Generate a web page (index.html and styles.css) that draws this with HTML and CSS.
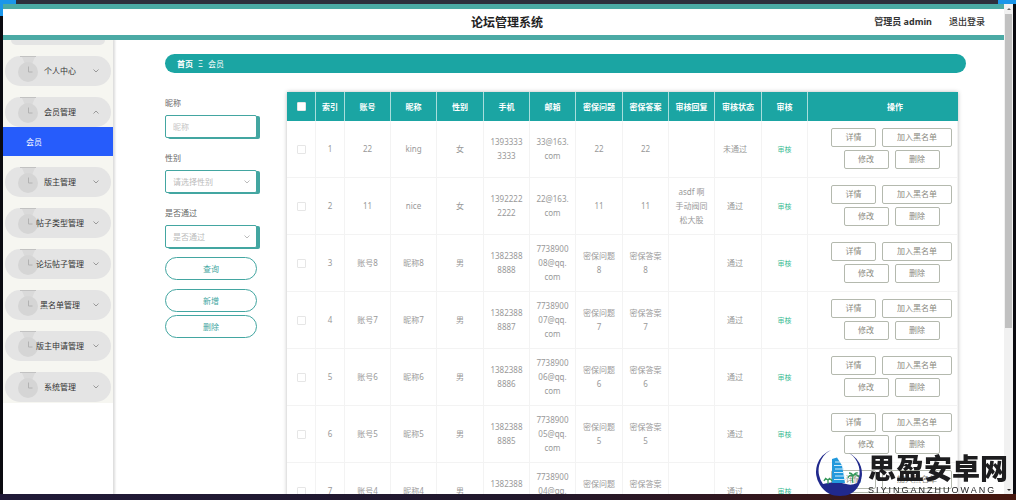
FILE: index.html
```
<!DOCTYPE html>
<html lang="zh-CN">
<head>
<meta charset="utf-8">
<title>论坛管理系统</title>
<link rel="stylesheet" href="styles.css">
</head>
<body>
<svg class="defs" aria-hidden="true">
  <symbol id="medal" viewBox="0 0 20 28">
    <path d="M4 2h13l-3 7H7z" fill="#dadada"/>
    <path d="M2 1.500h16" stroke="#c2c2c2"/>
    <circle cx="10" cy="17" r="10" fill="#d5d5d5"/>
    <path d="M10.500 11.500v5.500h4" fill="none" stroke="#b2b2b2"/>
  </symbol>
  <symbol id="chev" viewBox="0 0 8 6"><path d="M1.500 1.500L4 4l2.500-2.500" fill="none" stroke="currentColor"/></symbol>
</svg>
<div class="frame">
  <div class="app">
    <header class="top">
      <span></span>
      <h1>论坛管理系统</h1>
      <div class="user"><strong>管理员 admin</strong><a href="#">退出登录</a></div>
    </header>
    <div class="body">
      <aside class="side">
        <nav class="menu">
          <div class="clipped"></div>
          <button class="pill"><svg class="medal"><use href="#medal"/></svg><span>个人中心</span><svg class="chev"><use href="#chev"/></svg></button>
          <button class="pill open"><svg class="medal"><use href="#medal"/></svg><span>会员管理</span><svg class="chev"><use href="#chev"/></svg></button>
          <a class="sub" href="#">会员</a>
          <button class="pill"><svg class="medal"><use href="#medal"/></svg><span>版主管理</span><svg class="chev"><use href="#chev"/></svg></button>
          <button class="pill"><svg class="medal"><use href="#medal"/></svg><span>帖子类型管理</span><svg class="chev"><use href="#chev"/></svg></button>
          <button class="pill"><svg class="medal"><use href="#medal"/></svg><span>论坛帖子管理</span><svg class="chev"><use href="#chev"/></svg></button>
          <button class="pill"><svg class="medal"><use href="#medal"/></svg><span>黑名单管理</span><svg class="chev"><use href="#chev"/></svg></button>
          <button class="pill"><svg class="medal"><use href="#medal"/></svg><span>版主申请管理</span><svg class="chev"><use href="#chev"/></svg></button>
          <button class="pill"><svg class="medal"><use href="#medal"/></svg><span>系统管理</span><svg class="chev"><use href="#chev"/></svg></button>
        </nav>
      </aside>
      <main class="main">
        <div class="crumb"><strong>首页</strong><span>Ξ</span><span>会员</span></div>
        <div class="content">
          <form class="filter">
            <label for="nick">昵称</label>
            <input class="field" id="nick" type="text" placeholder="昵称">
            <label for="sex">性别</label>
            <div class="pick"><select class="field" id="sex"><option>请选择性别</option></select><svg class="chev"><use href="#chev"/></svg></div>
            <label for="pass">是否通过</label>
            <div class="pick"><select class="field" id="pass"><option>是否通过</option></select><svg class="chev"><use href="#chev"/></svg></div>
            <button class="round" type="button">查询</button>
            <button class="round add" type="button">新增</button>
            <button class="round" type="button">删除</button>
          </form>
          <table class="grid">
            <colgroup><col class="c-s"><col class="c-s"><col class="c-m"><col class="c-m"><col class="c-l"><col class="c-m"><col class="c-m"><col class="c-l"><col class="c-m"><col class="c-m"><col class="c-l"><col class="c-m"><col></colgroup>
            <thead><tr><th><input type="checkbox" aria-label="全选"></th><th>索引</th><th>账号</th><th>昵称</th><th>性别</th><th>手机</th><th>邮箱</th><th>密保问题</th><th>密保答案</th><th>审核回复</th><th>审核状态</th><th>审核</th><th>操作</th></tr></thead>
            <tbody id="rows"></tbody>
          </table>
        </div>
      </main>
    </div>
  </div>
  <div class="scroll"><i class="up"></i><div class="thumb"></div><i class="down"></i></div>
</div>
<div class="mark">
  <svg viewBox="0 0 48 48" class="logo">
    <path d="M15 1A23.500 23.500 0 0 0 4 36C9 44 16 47 24 47S39 44 43 36A23 23 0 0 0 33 4A23 23 0 0 1 41 34Q35 37 28 34.500Q18 32 7 35A23 23 0 0 1 15 1z" fill="#20298c"/>
    <path d="M16 34V10l5-1.500 5 8 3 17.500z" fill="#2299dc"/>
    <path d="M19 13h5M18 16.500h8M19 20h9M18 23.500h10M19 27h10M18 30.500h12" stroke="#cdeafa" stroke-width="1"/>
    <path d="M37 34q-1-3 0-7M32 29q1-4 5-2q3-3 6 1M33 24q3 0 4 3q2-4 5-3M12 35v-4M8 32q1-3 4-1q3-2 4 1M9 29l3 2 2-2" fill="none" stroke="#35985a" stroke-width="1.300"/>
  </svg>
  <div class="words"><b>思盈安卓网</b><span>SIYINGANZHUOWANG</span></div>
</div>
<script src="rows.js"></script>
</body>
</html>
```
FILE: styles.css
```
* { box-sizing: border-box; }
body {
  margin: 0;
  background: #24202e;
  color: #999;
  font: 8px/14px "Noto Sans", "Noto Sans CJK SC", sans-serif;
  overflow: hidden;
}
button, input, select { font: inherit; color: inherit; margin: 0; padding: 0; }
a { color: inherit; text-decoration: none; }
.defs { position: absolute; width: 0; height: 0; }
.frame {
  display: flex;
  height: 100vh;
  padding: 4px 3px 6px;
  background: linear-gradient(90deg, #201a38, #21182c 50%, #45170f) bottom / 100% 6px no-repeat, linear-gradient(90deg, #1b96ea 16px, #2d2f3d 16px calc(100% - 18px), #1b96ea 0) top / 100% 4px no-repeat, linear-gradient(#1b96ea, #1b96ea) left 0 top / 3px 16px no-repeat, #0a0a10;
}
.app { flex: 1; min-width: 0; display: flex; flex-direction: column; background: #fff; }
.top {
  display: grid;
  grid-template-columns: 1fr auto 1fr;
  align-items: center;
  flex: none;
  height: 36px;
  padding-right: 19px;
  padding-left: 6px;
  border: solid #4baaa5;
  border-width: 5px 0;
  color: #333;
}
.top h1 { margin: 0; font-size: 12px; line-height: 20px; color: #222; padding: 2px 0 0 20px; }
.user { display: flex; justify-content: flex-end; gap: 17px; font-size: 9px; font-weight: 500; }
.body { flex: 1; min-height: 0; display: flex; }
.side { flex: none; width: 110px; box-shadow: 1px 0 2px 1px #ddd; clip-path: inset(0 -4px 0 0); }
.menu { display: flex; flex-direction: column; gap: 11px; padding-bottom: 1px; background: #f6f6f1; }
.clipped { height: 5px; margin: 0 8px; border-radius: 0 0 20px 20px; background: #e4e4e4; }
.pill {
  display: grid;
  grid-template-columns: 1fr auto 1fr;
  align-items: center;
  height: 30px;
  margin: 0 2px;
  border: 0;
  border-radius: 15px;
  background: #e4e4e4;
  color: #333;
}
.pill span { grid-area: 1 / 2; white-space: nowrap; padding-left: 4px; z-index: 1; }
.medal { grid-area: 1 / 1 / 2 / 4; width: 20px; height: 28px; margin: -4px 0 0 13px; }
.pill .chev { grid-area: 1 / 3; justify-self: end; margin-right: 11px; }
.chev { width: 8px; height: 6px; color: #999; }
.open { margin-bottom: -11px; }
.open .chev { transform: rotate(180deg); }
.sub { padding: 0 23px; line-height: 29px; background: #265cfb; color: #fff; }
.main { flex: 1; min-width: 0; padding: 14px 38px 0 52px; overflow: hidden; }
.crumb {
  display: flex;
  align-items: center;
  gap: 5px;
  height: 19px;
  padding: 0 12px;
  border-radius: 10px;
  background: #1ba5a3;
  color: #fff;
}
.content { display: flex; align-items: flex-start; gap: 30px; padding: 19px 8px 0 0; }
.filter { flex: none; width: 92px; display: flex; flex-direction: column; padding-top: 5px; }
.filter label { line-height: 12px; margin-bottom: 6px; color: #666; }
.field {
  width: 100%;
  height: 23px;
  padding: 0 7px;
  margin-bottom: 14px;
  border: 1px solid #43a6a1;
  border-radius: 2px;
  background: #fff;
  box-shadow: 3px 1px 0 #43a6a1;
  color: #bbb;
  appearance: none;
}
.field::placeholder { color: #c4c4c4; }
.pick { display: grid; }
.pick > * { grid-area: 1 / 1; }
.pick .chev { justify-self: end; margin: 9px 6px 0 0; color: #bbb; }
.pick:nth-of-type(2) .field { margin-bottom: 9px; }
.round {
  height: 23px;
  margin-bottom: 3px;
  border: 1px solid #43a6a1;
  border-radius: 12px;
  background: #fff;
  color: #43a6a1;
}
.add { margin-top: 6px; }
.grid {
  flex: 1;
  width: 0;
  table-layout: fixed;
  border-collapse: separate;
  border-spacing: 0;
  background: #fff;
  box-shadow: 0 0 4px #bbb;
  text-align: center;
}
.c-s { width: 29px; }
.c-m { width: 46px; }
.c-l { width: 47px; }
.grid th { height: 29px; padding: 0; background: #1ba5a3; color: #fff; border: solid #a9dedc; border-width: 0 1px 0 0; white-space: nowrap; }
.grid td { height: 57px; padding: 0 6px; border: solid #f3f3f3; border-width: 0 1px 1px 0; overflow-wrap: anywhere; }
.grid th:last-child { border-right: 0; padding-left: 24px; }
.grid td:nth-child(11) { padding: 0 11px 0 5px; white-space: nowrap; }
.grid input { display: block; width: 9px; height: 9px; margin: 0 auto; appearance: none; border: 1px solid #e6e6e6; border-radius: 1px; background: #fff; }
.check { border: 0; padding: 0; background: none; font-size: 7px; color: #3dbd96; }
.grid td:last-child { padding: 0 0 0 18px; }
.ops { display: flex; flex-wrap: wrap; justify-content: center; gap: 3px 6px; margin-top: -2px; }
.ops button { width: 45px; height: 19px; border: 1px solid #b4b9ae; border-radius: 2px; background: #fff; color: #8a8a80; }
.ops .wide { width: 70px; }
.scroll { flex: none; width: 9px; display: flex; flex-direction: column; align-items: center; background: #f1f1f1; }
.up, .down { border: 2px solid transparent; margin: 3px 0; }
.up { border-bottom-color: #666; border-top: 0; margin: 4px 0; }
.down { border-top-color: #333; border-bottom: 0; }
.thumb { width: 7px; height: 64%; margin-bottom: auto; background: #c1c1c1; }
.mark { position: fixed; right: 8px; bottom: 3px; display: flex; align-items: center; gap: 4px; color: #1d1d1f; }
.logo { width: 48px; height: 48px; }
.words { display: flex; flex-direction: column; }
.words b { font-size: 28px; line-height: 34px; font-weight: 900; }
.words span { font: 9px/10px "Liberation Sans", sans-serif; letter-spacing: 2px; }
```
FILE: rows.js
```
const rows = [
  ["1", "22", "king", "女", "13933333333", "33@163.<wbr>com", "22", "22", "", "未通过"],
  ["2", "11", "nice", "女", "13922222222", "22@163.<wbr>com", "11", "11", "asdf 啊手动阀同松大股", "通过"],
];
for (let i = 3; i < 8; i++) {
  const n = 11 - i;
  rows.push([i, "账号" + n, "昵称" + n, "男", "1382388888" + n, "77389000" + n + "@qq.<wbr>com", "密保问题" + n, "密保答案" + n, "", "通过"]);
}
document.getElementById("rows").innerHTML = rows.map(r =>
  `<tr><td><input type="checkbox" aria-label="选择 ${r[0]}"></td>` +
  r.map(c => `<td>${c}</td>`).join("") +
  `<td><button class="check">审核</button></td><td><div class="ops"><button>详情</button><button class="wide">加入黑名单</button><button>修改</button><button>删除</button></div></td></tr>`
).join("");
```
